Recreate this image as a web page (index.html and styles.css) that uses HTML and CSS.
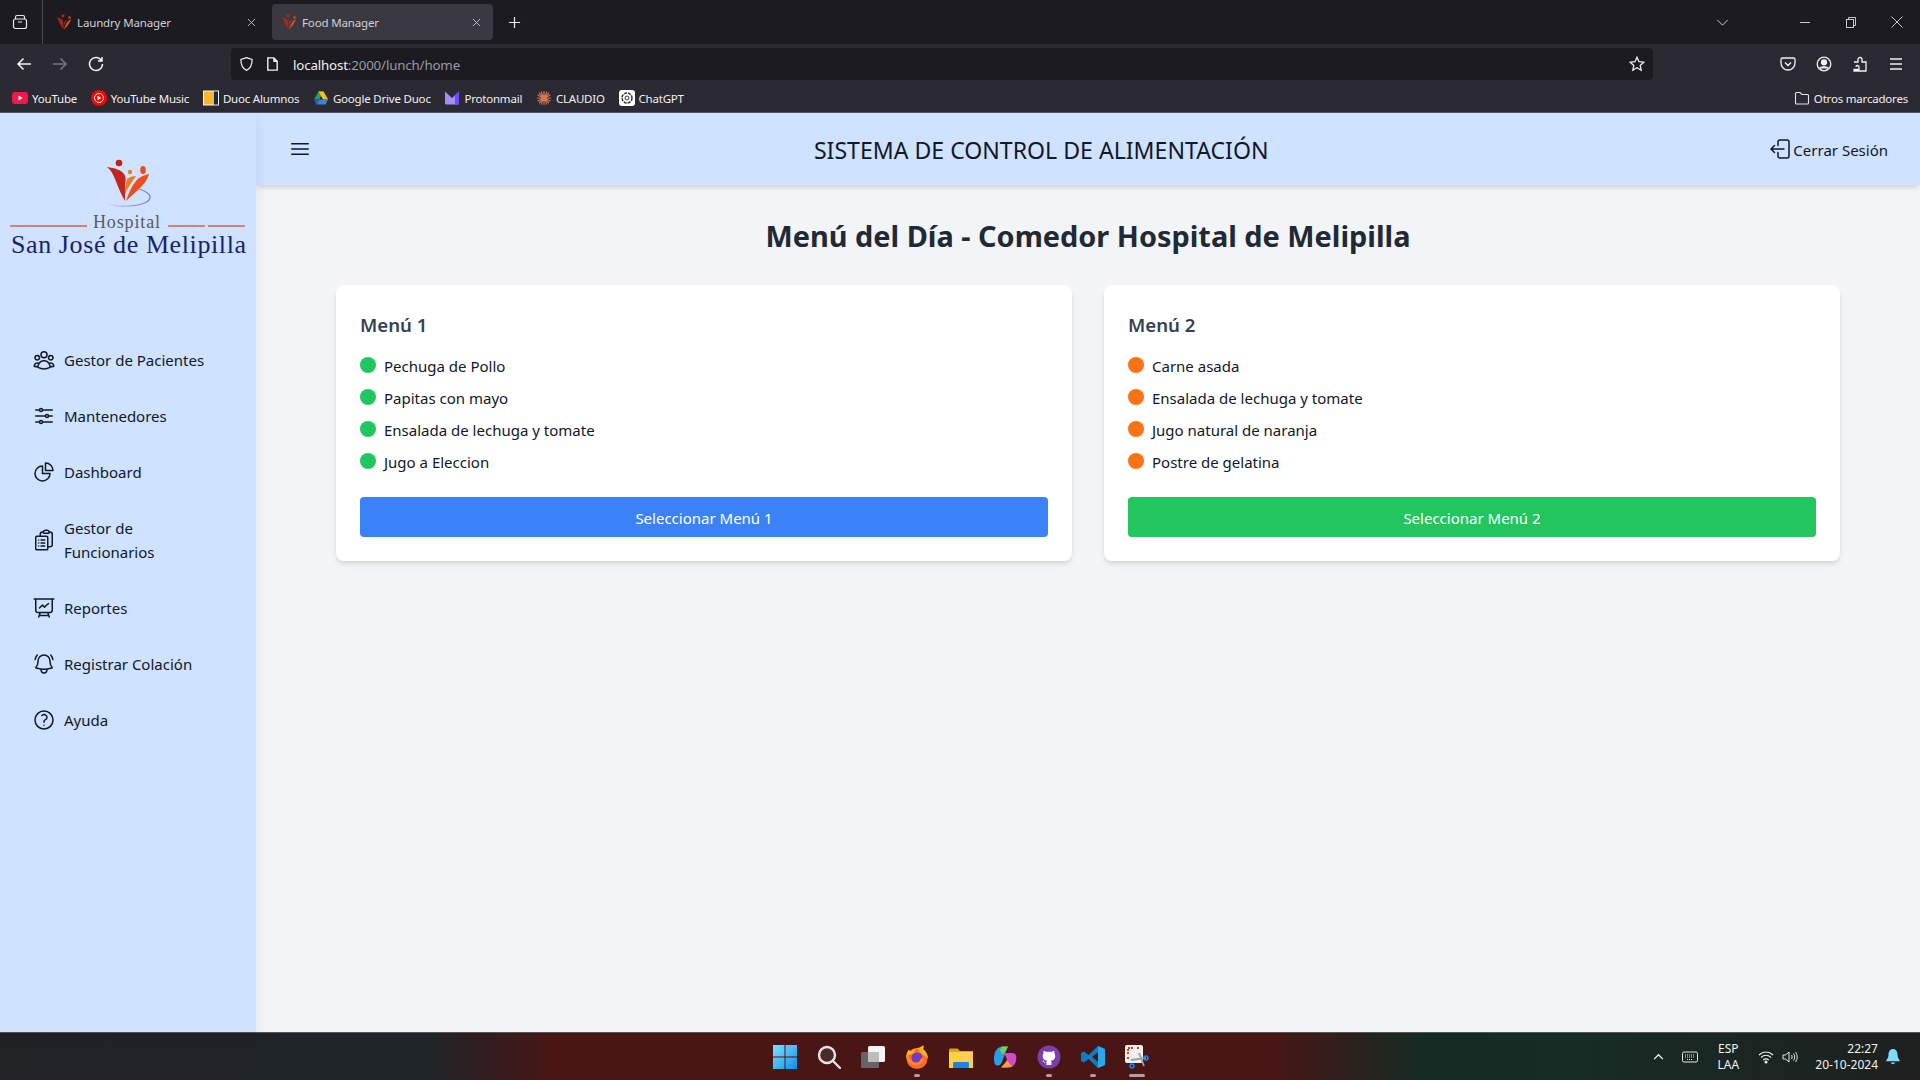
FILE: index.html
```html
<!DOCTYPE html>
<html lang="es">
<head>
<meta charset="utf-8">
<title>Food Manager</title>
<link rel="stylesheet" href="styles.css">
</head>
<body>
<div class="browser">
  <svg width="0" height="0" class="defs"><defs>
    <g id="fav"><circle cx="7" cy="1.800" r="1.500" fill="#b5261c"/><circle cx="13.500" cy="3.500" r="1.300" fill="#e0441c"/><path d="M1 3.500c3 .3 5.500 1.500 6 4 .5 2.500.5 5 .5 8C5 12 3 8 1 3.500z" fill="#a8261e"/><path d="M15 5c-1 4-4 7.500-7 10.500C9 11 11 7 15 5z" fill="#e0481c"/><path d="M11 5.500c-1.500 2-2.500 3.500-3 6 0-2.500.8-4.500 3-6z" fill="#e07a28"/></g>
  </defs></svg>
  <div class="tabstrip">
    <div class="tabs-btn"><svg width="16" height="16" viewBox="0 0 16 16" fill="none" stroke="#e8e8ea" stroke-width="1.200"><rect x="1.500" y="5" width="13" height="9.500" rx="2"/><path d="M3.500 5V3a1.500 1.500 0 0 1 1.500-1.500h6A1.500 1.500 0 0 1 12.500 3v2M6 8h4"/></svg></div>
    <div class="tab">
      <svg class="fav" viewBox="0 0 16 16"><use href="#fav"/></svg><span class="tab-title">Laundry Manager</span>
      <svg class="tab-x" viewBox="0 0 10 10" stroke="#c4c4c8" stroke-width="1"><path d="M1 1l8 8M9 1l-8 8"/></svg>
    </div>
    <div class="tab tab-active">
      <svg class="fav" viewBox="0 0 16 16"><use href="#fav"/></svg><span class="tab-title">Food Manager</span>
      <svg class="tab-x" viewBox="0 0 10 10" stroke="#c4c4c8" stroke-width="1"><path d="M1 1l8 8M9 1l-8 8"/></svg>
    </div>
    <svg class="newtab" viewBox="0 0 14 14" stroke="#e8e8ea" stroke-width="1.300"><path d="M7 1v12M1 7h12"/></svg>
    <div class="spacer"></div>
    <svg class="tabs-chev" viewBox="0 0 14 8" fill="none" stroke="#cfcfd3" stroke-width="1.100"><path d="M1 1l6 6 6-6"/></svg>
    <div class="winctl">
      <svg viewBox="0 0 12 12" stroke="#c8c8cc" fill="none"><path d="M1 6.500h10"/></svg>
      <svg viewBox="0 0 12 12" stroke="#c8c8cc" fill="none"><rect x="1.500" y="3.500" width="7" height="8"/><path d="M3.500 3.500v-2h7v8h-2"/></svg>
      <svg viewBox="0 0 12 12" stroke="#c8c8cc" fill="none"><path d="M.5.5l11 11M11.500.5l-11 11"/></svg>
    </div>
  </div>
  <div class="toolbar">
    <div class="nav-btns">
      <svg viewBox="0 0 16 16" fill="none" stroke="#f4f4f6" stroke-width="1.500"><path d="M15 8H2M7.500 2.500L2 8l5.500 5.500"/></svg>
      <svg viewBox="0 0 16 16" fill="none" stroke="#77777c" stroke-width="1.500"><path d="M1 8h13M8.500 2.500L14 8l-5.500 5.500"/></svg>
      <svg viewBox="0 0 16 16" fill="none" stroke="#f4f4f6" stroke-width="1.500"><path d="M13.500 4.500A6.500 6.500 0 1 0 14.500 8M14 1v4h-4"/></svg>
    </div>
    <div class="urlbar">
      <svg class="ub-ic" viewBox="0 0 16 16" fill="none" stroke="#f0f0f2" stroke-width="1.300"><path d="M8 1.200l6 2c0 6-1.500 9.500-6 11.600C3.500 12.700 2 9.200 2 3.200z"/></svg>
      <svg class="ub-ic" viewBox="0 0 16 16" fill="none" stroke="#f0f0f2" stroke-width="1.500"><path d="M3 1.500h6.500l3.500 3.500v9.500H3zM9.500 1.500V5H13"/></svg>
      <span class="url"><span class="url-host">localhost</span>:2000/lunch/home</span>
      <div class="spacer"></div>
      <svg class="ub-star" viewBox="0 0 16 16" fill="none" stroke="#f0f0f2" stroke-width="1.300"><path d="M8 1.300l2 4.400 4.800.5-3.600 3.200 1 4.800L8 11.800l-4.200 2.400 1-4.800L1.200 6.200 6 5.700z"/></svg>
    </div>
    <div class="tool-icons">
      <svg viewBox="0 0 16 16" fill="none" stroke="#f0f0f2" stroke-width="1.300"><path d="M2.500 2h11A1.500 1.500 0 0 1 15 3.500V7a7 7 0 0 1-14 0V3.500A1.500 1.500 0 0 1 2.500 2zM5 6.500L8 9.500l3-3"/></svg>
      <svg viewBox="0 0 16 16" fill="none" stroke="#f0f0f2" stroke-width="1.300"><circle cx="8" cy="8" r="6.800"/><circle cx="8" cy="6.300" r="2.500" fill="#f0f0f2"/><path d="M3.500 12.500c1-2.300 8-2.300 9 0" fill="#f0f0f2"/></svg>
      <svg viewBox="0 0 16 16" fill="none" stroke="#f0f0f2" stroke-width="1.300"><path d="M2 6h4V3.500a2 2 0 0 1 4 0V6h4v9H2v-1.500h5V11a1.500 1.500 0 0 0-3 0"/></svg>
      <svg viewBox="0 0 16 16" fill="none" stroke="#f0f0f2" stroke-width="1.300"><path d="M2 3h12M2 8h12M2 13h12"/></svg>
    </div>
  </div>
  <div class="bookmarks">
    <div class="bm"><svg class="bm-ic" viewBox="0 0 16 16"><rect y="2" width="16" height="12" rx="3" fill="#f0194a"/><path d="M6.500 5.500v5l4-2.500z" fill="#fff"/></svg>YouTube</div>
    <div class="bm"><svg class="bm-ic" viewBox="0 0 16 16"><circle cx="8" cy="8" r="8" fill="#f00"/><circle cx="8" cy="8" r="4.500" fill="none" stroke="#fff"/><path d="M6.500 5.800v4.400L10.300 8z" fill="#fff"/></svg>YouTube Music</div>
    <div class="bm"><svg class="bm-ic" viewBox="0 0 16 16"><rect x=".5" y="1" width="15" height="14" fill="#fbb62c" stroke="#f4f4f4"/><rect x="11" y="1.500" width="4" height="13" fill="#0d2b56"/></svg>Duoc Alumnos</div>
    <div class="bm"><svg class="bm-ic" viewBox="0 0 16 16"><path d="M5.500 1.500h5L6.200 9.500H1z" fill="#1ea362"/><path d="M10.500 1.500L15 9.500h-5L5.500 1.500z" fill="#ffc107"/><path d="M3.500 14.500L6.200 9.500H15l-2.500 5z" fill="#3f7ee8"/><path d="M1 9.500h5.200l-2.700 5z" fill="#1265c9"/></svg>Google Drive Duoc</div>
    <div class="bm"><svg class="bm-ic" viewBox="0 0 16 16"><path d="M1 1.500L8 8l7-6.500V13a1.500 1.500 0 0 1-1.500 1.500h-11A1.500 1.500 0 0 1 1 13z" fill="#a98cf5"/><path d="M8 8l7-6.500V14.500h-4V6z" fill="#6d4aff"/></svg>Protonmail</div>
    <div class="bm"><svg class="bm-ic" viewBox="0 0 16 16" stroke="#d97757" stroke-width="1.100"><path d="M8 1v14M1 8h14M3 3l10 10M13 3L3 13M5 1.500l6 13M11 1.500l-6 13M1.500 5l13 6M14.500 5l-13 6"/></svg>CLAUDIO</div>
    <div class="bm"><svg class="bm-ic" viewBox="0 0 16 16"><rect width="16" height="16" rx="3" fill="#fff"/><circle cx="8" cy="8" r="5" fill="none" stroke="#333" stroke-width="1.500" stroke-dasharray="3 1"/><circle cx="8" cy="8" r="2" fill="none" stroke="#333"/></svg>ChatGPT</div>
    <div class="spacer"></div>
    <div class="bm bm-other"><svg class="bm-ic" viewBox="0 0 16 16" fill="none" stroke="#e6e6e8" stroke-width="1.100"><path d="M1.500 13V3.500a1 1 0 0 1 1-1h3.500L8 4.500h5.500a1 1 0 0 1 1 1V13a1 1 0 0 1-1 1h-11a1 1 0 0 1-1-1z"/></svg>Otros marcadores</div>
  </div>
</div>

<div class="app">
  <aside class="sidebar">
    <div class="logo">
      <svg width="256" height="219" viewBox="0 0 256 219">
        <defs><linearGradient id="ring" x1="0" y1="0" x2="1" y2="0"><stop offset="0" stop-color="#e4e4f6"/><stop offset="1" stop-color="#7a70b8"/></linearGradient></defs>
        <path d="M108 78c-10 6-8 13 10 15 18 1 34-3 32-10-1-3-5-5-11-7" fill="none" stroke="url(#ring)" stroke-width="1.200"/>
        <circle cx="119" cy="50" r="3.300" fill="#c2201c"/>
        <ellipse cx="143" cy="57" rx="2.800" ry="4" fill="#f04a1c"/>
        <circle cx="130" cy="59" r="2.200" fill="#ee7a20"/>
        <path d="M107 54c8 1 14 3 17 7 2 3 2 6 1 10l0 17c-4-7-7-14-10-22-2-5-4-9-8-12z" fill="#c3261d"/>
        <path d="M136 63c-4 6-8 11-11 18 0-6 1-11 2-15 3-2 6-3 9-3z" fill="#ee7a24"/>
        <path d="M149 61c-2 7-6 11-10 15l-13 12c2-6 5-14 10-20 3-4 8-6 13-7z" fill="#f04d1e"/>
        <path d="M10 113h77M168 113h37M208 113h37" stroke="#e25a4a" stroke-width="1.300"/>
        <text x="93" y="115" class="logo-small" textLength="67">Hospital</text>
        <text x="11" y="140" class="logo-big" textLength="235">San José de Melipilla</text>
      </svg>
    </div>
    <nav class="nav">
      <a class="nav-item"><svg class="hi" viewBox="0 0 24 24"><path d="M18 18.720a9.094 9.094 0 003.741-.479 3 3 0 00-4.682-2.720m.94 3.198l.001.031c0 .225-.012.447-.037.666A11.944 11.944 0 0112 21c-2.170 0-4.207-.576-5.963-1.584A6.062 6.062 0 016 18.719m12 0a5.971 5.971 0 00-.941-3.197m0 0A5.995 5.995 0 0012 12.750a5.995 5.995 0 00-5.058 2.772m0 0a3 3 0 00-4.681 2.720 8.986 8.986 0 003.740.477m.94-3.197a5.971 5.971 0 00-.94 3.197M15 6.750a3 3 0 11-6 0 3 3 0 016 0zm6 3a2.250 2.250 0 11-4.500 0 2.250 2.250 0 014.500 0zm-13.500 0a2.250 2.250 0 11-4.500 0 2.250 2.250 0 014.500 0z"/></svg><span>Gestor de Pacientes</span></a>
      <a class="nav-item"><svg class="hi" viewBox="0 0 24 24"><path d="M10.500 6h9.750M10.500 6a1.500 1.500 0 11-3 0m3 0a1.500 1.500 0 10-3 0M3.750 6H7.500m3 12h9.750m-9.750 0a1.500 1.500 0 01-3 0m3 0a1.500 1.500 0 00-3 0m-3.750 0H7.500m9-6h3.750m-3.750 0a1.500 1.500 0 01-3 0m3 0a1.500 1.500 0 00-3 0m-9.750 0h9.750"/></svg><span>Mantenedores</span></a>
      <a class="nav-item"><svg class="hi" viewBox="0 0 24 24"><path d="M10.500 6a7.500 7.500 0 107.500 7.500h-7.500V6z"/><path d="M13.500 10.500H21A7.500 7.500 0 0013.500 3v7.500z"/></svg><span>Dashboard</span></a>
      <a class="nav-item"><svg class="hi" viewBox="0 0 24 24"><path d="M9 12h3.750M9 15h3.750M9 18h3.750m3 .75H18a2.250 2.250 0 002.250-2.250V6.108c0-1.135-.845-2.098-1.976-2.192a48.424 48.424 0 00-1.123-.08m-5.801 0c-.065.21-.1.433-.1.664 0 .414.336.75.75.75h4.500a.75.75 0 00.75-.75 2.250 2.250 0 00-.1-.664m-5.800 0A2.251 2.251 0 0113.500 2.250H15c1.012 0 1.867.668 2.150 1.586m-5.800 0c-.376.023-.75.05-1.124.08C9.095 4.010 8.250 4.973 8.250 6.108V8.250m0 0H4.875c-.621 0-1.125.504-1.125 1.125v11.250c0 .621.504 1.125 1.125 1.125h9.750c.621 0 1.125-.504 1.125-1.125V9.375c0-.621-.504-1.125-1.125-1.125H8.250zM6.750 12h.008v.008H6.750V12zm0 3h.008v.008H6.750V15zm0 3h.008v.008H6.750V18z"/></svg><span>Gestor de<br>Funcionarios</span></a>
      <a class="nav-item"><svg class="hi" viewBox="0 0 24 24"><path d="M3.750 3v11.250A2.250 2.250 0 006 16.500h2.250M3.750 3h-1.500m1.500 0h16.500m0 0h1.500m-1.500 0v11.250A2.250 2.250 0 0118 16.500h-2.250m-7.500 0h7.500m-7.500 0l-1 3m8.500-3l1 3m0 0l.5 1.500m-.5-1.500h-9.500m0 0l-.5 1.500m.75-9l3-3 2.148 2.148A12.061 12.061 0 0116.500 7.605"/></svg><span>Reportes</span></a>
      <a class="nav-item"><svg class="hi" viewBox="0 0 24 24"><path d="M14.857 17.082a23.848 23.848 0 005.454-1.310A8.967 8.967 0 0118 9.750v-.7V9A6 6 0 006 9v.75a8.967 8.967 0 01-2.312 6.022c1.733.64 3.560 1.085 5.455 1.310m5.714 0a24.255 24.255 0 01-5.714 0m5.714 0a3 3 0 11-5.714 0M3.124 7.500A8.969 8.969 0 015.292 3m13.416 0a8.969 8.969 0 012.168 4.500"/></svg><span>Registrar Colación</span></a>
      <a class="nav-item"><svg class="hi" viewBox="0 0 24 24"><path d="M9.879 7.519c1.171-1.025 3.071-1.025 4.242 0 1.172 1.025 1.172 2.687 0 3.712-.203.179-.43.326-.67.442-.745.361-1.450.999-1.450 1.827v.75M21 12a9 9 0 11-18 0 9 9 0 0118 0zm-9 5.250h.008v.008H12v-.008z"/></svg><span>Ayuda</span></a>
    </nav>
  </aside>
  <div class="content">
    <header class="topbar">
      <svg class="hi burger" viewBox="0 0 24 24"><path d="M3.750 6.750h16.500M3.750 12h16.500m-16.500 5.250h16.500"/></svg>
      <h1 class="app-title">SISTEMA DE CONTROL DE ALIMENTACIÓN</h1>
      <a class="logout"><svg class="hi logout-ic" viewBox="1 0 20 24"><path d="M9 8.500V5a2 2 0 012-2h7a2 2 0 012 2v14a2 2 0 01-2 2h-7a2 2 0 01-2-2v-3.500M15 12H2m0 0l3.500-3.500M2 12l3.500 3.500"/></svg><span>Cerrar Sesión</span></a>
    </header>
    <main class="main">
      <h2 class="page-title">Menú del Día - Comedor Hospital de Melipilla</h2>
      <div class="cards">
        <section class="card">
          <h3 class="card-title">Menú 1</h3>
          <ul class="items items-green">
            <li>Pechuga de Pollo</li>
            <li>Papitas con mayo</li>
            <li>Ensalada de lechuga y tomate</li>
            <li>Jugo a Eleccion</li>
          </ul>
          <button class="btn btn-blue">Seleccionar Menú 1</button>
        </section>
        <section class="card">
          <h3 class="card-title">Menú 2</h3>
          <ul class="items items-orange">
            <li>Carne asada</li>
            <li>Ensalada de lechuga y tomate</li>
            <li>Jugo natural de naranja</li>
            <li>Postre de gelatina</li>
          </ul>
          <button class="btn btn-green">Seleccionar Menú 2</button>
        </section>
      </div>
    </main>
  </div>
</div>

<footer class="taskbar">
  <div class="task-apps">
    <div class="task-app"><svg viewBox="0 0 24 24"><defs><linearGradient id="w" x1="0" y1="0" x2="1" y2="1"><stop offset="0" stop-color="#7fe0ff"/><stop offset="1" stop-color="#0f8fe8"/></linearGradient></defs><path fill="url(#w)" d="M0 0h11.500v11.500H0zM12.500 0H24v11.500H12.500zM0 12.500h11.500V24H0zM12.500 12.500H24V24H12.500z"/></svg></div>
    <div class="task-app"><svg viewBox="0 0 24 24" fill="none" stroke="#e8e4e4" stroke-width="2.400"><circle cx="10" cy="10" r="8" fill="#4a2a2a"/><path d="M16 16l7 7" stroke-linecap="round"/></svg></div>
    <div class="task-app"><svg viewBox="0 0 24 24"><rect x="7" y="1" width="17" height="16" rx="1.500" fill="#f4f4f4"/><rect x="0" y="7" width="18" height="16" rx="1.500" fill="#6a6a6a" fill-opacity=".92"/><rect x="7" y="7" width="11" height="10" fill="#bdbdbd"/></svg></div>
    <div class="task-app on"><svg viewBox="0 0 24 24"><circle cx="12" cy="13.500" r="10.500" fill="#ff6a2a"/><path d="M12 3c4-.5 5-2 6-3 1 2 1 3 0 4 3 2 5 6 5 9.500L16 8z" fill="#ffb320"/><path d="M1.500 11c0-3 1-5 2.500-6.500L5 6.500 12 3c-2 2-3 3-3 5z" fill="#ffb320"/><circle cx="12" cy="13" r="5.500" fill="#6e3bc4"/><path d="M2 10c1 6 6 10 11 8.500 3-1 4-3 4-5" fill="none" stroke="#ff8a2a" stroke-width="2.500"/></svg></div>
    <div class="task-app"><svg viewBox="0 0 24 24"><path d="M0 5a1.500 1.500 0 0 1 1.500-1.500h7L11 6h13v16H0z" fill="#d9a520"/><rect y="7" width="24" height="16" fill="#fbd04a"/><rect x="4" y="17" width="16" height="6" rx="1" fill="#1a88d8"/></svg></div>
    <div class="task-app"><svg viewBox="0 0 24 24"><path d="M1 14C1 7 4 2 9 1.500h6L10 14c-1 5-4 7-6 6.500-2 0-3-3-3-6.500z" fill="#2a9fe8"/><path d="M9 1.500h6l-5 8-3-4z" fill="#7bd04a"/><path d="M11 8h8c4 0 5 3 4 8-1 5-5 7-9 6.500H8c3-1 5-4 6-8z" fill="#d04ac8"/><path d="M14 22.500H8l6-7 5 6z" fill="#f0a040"/></svg></div>
    <div class="task-app on"><svg viewBox="0 0 24 24"><circle cx="12" cy="12" r="11.500" fill="#7a3fa8"/><path d="M9.500 20v-2.500c-3 .6-3.500-1.200-4-2 .5 0 1.300.3 2 1.300.7.800 1.500.5 2 .2 0-.7.300-1.100.6-1.400-2.400-.3-4.400-1.300-4.400-4.600 0-1 .3-1.800.9-2.400-.1-.3-.4-1.200.1-2.500 0 0 1-.3 2.700 1 1.600-.4 3.500-.4 5.100 0 1.700-1.300 2.700-1 2.700-1 .5 1.300.2 2.200.1 2.500.6.600.9 1.400.9 2.400 0 3.300-2 4.300-4.400 4.600.4.400.6.900.6 1.700V20z" fill="#fff"/></svg></div>
    <div class="task-app on"><svg viewBox="0 0 24 24"><path d="M17 1l7 3v16l-7 3L7.500 14l-4.500 3.500L0 16V8l3-1.500 4.500 3.500z" fill="#0e7dc8"/><path d="M17 1l7 3v16l-7 3zM17 7l-6 5 6 5z" fill="#2aa8ec"/><path d="M17 7l-6 5 6 5z" fill="#4a1414"/></svg></div>
    <div class="task-app on wide"><svg viewBox="0 0 24 24"><rect x="0" y="0" width="18" height="18" rx="2" fill="#f2efef"/><path d="M3 9V3h6M12 3h2M3 12v2" stroke="#d8362a" stroke-width="2" stroke-dasharray="2 1" fill="none"/><path d="M6 15l15-2M14 8l5 13" stroke="#9aa0a8" stroke-width="1.800"/><circle cx="21" cy="13" r="2" fill="none" stroke="#1a88e8" stroke-width="1.500"/><circle cx="7" cy="21" r="2" fill="none" stroke="#1a88e8" stroke-width="1.500"/></svg></div>
  </div>
  <div class="tray">
    <svg class="tray-chev" viewBox="0 0 12 8" fill="none" stroke="#f0f0f0" stroke-width="1.500"><path d="M1 7l5-5 5 5"/></svg>
    <svg class="tray-kb" viewBox="0 0 16 12" fill="none" stroke="#e8e8e8"><rect x=".5" y="1" width="15" height="10" rx="1.500"/><path d="M3 4h10M3 6h10M5 8.500h6" stroke-dasharray="1 1"/></svg>
    <div class="tray-lang"><span>ESP</span><span>LAA</span></div>
    <svg class="tray-wifi" viewBox="0 0 16 14" fill="none" stroke="#f0f0f0" stroke-width="1.100"><path d="M1 5c4-4 10-4 14 0M3 7.500c3-2.700 7-2.700 10 0M5.200 10c1.700-1.300 3.900-1.300 5.600 0"/><circle cx="8" cy="12" r="1" fill="#f0f0f0"/></svg>
    <svg class="tray-vol" viewBox="0 0 16 14" fill="none" stroke="#e8e8e8" stroke-width="1"><path d="M1 5v4h2.500L7 12V2L3.500 5zM9.500 5c.8 1.200.8 2.800 0 4M11.500 3.500c1.500 2 1.500 5 0 7M13.500 2c2.200 3 2.200 7 0 10"/></svg>
    <div class="tray-clock"><span>22:27</span><span>20-10-2024</span></div>
    <svg class="tray-bell" viewBox="0 0 14 16" fill="#7fdcfa"><path d="M7 0c3 0 4.500 2.500 4.500 5.500 0 2.500.8 4 2.200 5.800.3.500 0 1-.6 1H.9c-.6 0-.9-.5-.6-1C1.700 9.500 2.500 8 2.500 5.500 2.500 2.500 4 0 7 0zM4.800 13.500h4.400a2.300 2.300 0 0 1-4.400 0z"/></svg>
  </div>
</footer>
</body>
</html>
```

FILE: styles.css
```css
* { box-sizing: border-box; }
html, body { margin: 0; padding: 0; }
body {
  width: 1920px;
  height: 1080px;
  overflow: hidden;
  display: flex;
  flex-direction: column;
  font-family: "Noto Sans", "Open Sans", sans-serif;
  background: #f3f4f6;
  color: #111827;
}
.defs { display: block; height: 0; }
.spacer { flex: 1; }

/* browser chrome */
.browser { flex: none; height: 113px; background: #2b2a33; border-bottom: 1px solid #55555f; color: #f0f0f2; }
.tabstrip { height: 44px; background: #1c1b22; display: flex; align-items: center; }
.tabs-btn { width: 43px; height: 44px; display: flex; align-items: center; justify-content: center; border-right: 1px solid #4c4c54; padding-right: 3px; flex: none; }
.tab { width: 229px; height: 36px; border-radius: 4px; display: flex; align-items: center; padding: 0 16px 0 13px; font-size: 11.500px; color: #d0d0d4; flex: none; }
.tab-active { background: #3a3942; width: 221px; padding: 0 12px 0 9px; }
.fav { width: 16px; height: 16px; margin-right: 5px; flex: none; }
.tab-title { flex: 1; white-space: nowrap; letter-spacing: -.15px; }
.tab-x { width: 9px; height: 9px; flex: none; }
.newtab { width: 13px; height: 13px; margin-left: 15px; flex: none; }
.tabs-chev { width: 13px; height: 7px; flex: none; margin-right: 70px; }
.winctl { display: flex; gap: 34px; padding-right: 17px; align-items: center; }
.winctl svg { width: 12px; height: 12px; display: block; }

.toolbar { height: 42px; display: flex; align-items: flex-start; padding-top: 4px; }
.nav-btns { width: 231px; height: 32px; padding-left: 16px; display: flex; align-items: center; gap: 20px; flex: none; }
.nav-btns svg { width: 16px; height: 16px; }
.urlbar { width: 1422px; height: 32px; background: #1c1b22; border-radius: 4px; display: flex; align-items: center; padding: 0 8px; flex: none; }
.ub-ic { width: 15px; height: 16px; margin-right: 11px; flex: none; }
.ub-ic + .ub-ic { margin-right: 13px; }
.url { font-size: 13.300px; color: #9a9aa0; letter-spacing: -.15px; padding-top: 2px; }
.url-host { color: #f4f4f6; }
.ub-star { width: 16px; height: 16px; flex: none; margin-right: 0; }
.tool-icons { flex: 1; height: 32px; display: flex; align-items: center; padding-left: 127px; gap: 20px; }
.tool-icons svg { width: 16px; height: 16px; flex: none; }

.bookmarks { height: 26px; display: flex; align-items: center; padding: 0 12px 2px; font-size: 11.500px; gap: 13.700px; }
.bm { display: flex; align-items: center; gap: 4px; white-space: nowrap; letter-spacing: -.2px; }
.bm-ic { width: 16px; height: 16px; flex: none; }

/* app */
.app { flex: 1; display: flex; min-height: 0; background: #f3f4f6; }
.sidebar { width: 256px; flex: none; background: #cfe2ff; box-shadow: 0 4px 12px rgba(0,0,0,.08); position: relative; z-index: 2; }
.logo svg { display: block; }
.logo-small { font-family: "Liberation Serif", serif; font-size: 18px; fill: #5a5a62; }
.logo-big { font-family: "Liberation Serif", serif; font-size: 26px; fill: #1a1f6e; }
.nav { display: flex; flex-direction: column; }
.nav-item { display: flex; align-items: center; gap: 8px; padding: 16px 32px; font-size: 15px; line-height: 24px; color: #111827; }
.hi { width: 24px; height: 24px; flex: none; fill: none; stroke: #111827; stroke-width: 1.500; stroke-linecap: round; stroke-linejoin: round; }

.content { flex: 1; min-width: 0; display: flex; flex-direction: column; }
.topbar { height: 72px; flex: none; background: #cfe2ff; display: flex; align-items: center; justify-content: space-between; padding: 0 32px; box-shadow: 0 4px 6px -1px rgba(0,0,0,.1), 0 2px 4px -2px rgba(0,0,0,.1); position: relative; z-index: 1; }
.burger { width: 24px; height: 24px; }
.app-title { margin: 0; padding-top: 2px; font-size: 23.100px; line-height: 32px; font-weight: 400; color: #111827; }
.logout { display: flex; align-items: center; font-size: 15px; line-height: 24px; }
.logout span { padding-top: 2px; }
.logout .logout-ic { width: 20px; margin-right: 3px; }
.main { flex: 1; padding: 33px 80px; }
.page-title { margin: 0 0 31px; text-align: center; font-size: 28.900px; line-height: 36px; font-weight: 700; color: #1f2937; }
.cards { display: grid; grid-template-columns: 1fr 1fr; gap: 32px; }
.card { background: #fff; border-radius: 8px; padding: 24px; box-shadow: 0 4px 6px -1px rgba(0,0,0,.1), 0 2px 4px -2px rgba(0,0,0,.1); }
.card-title { margin: 0 0 15px; padding-top: 2px; font-size: 18.600px; line-height: 28px; font-weight: 600; color: #374151; }
.items { list-style: none; margin: 0 0 23px; padding: 0; display: flex; flex-direction: column; gap: 8px; }
.items li { display: flex; align-items: center; gap: 8px; font-size: 15px; line-height: 24px; color: #111827; }
.items li::before { content: ""; width: 16px; height: 16px; border-radius: 50%; margin-top: -3px; background: #22c55e; flex: none; }
.items-orange li::before { background: #f97316; }
.btn { display: block; width: 100%; height: 40px; padding-top: 2px; border: 0; border-radius: 4px; color: #fff; font: inherit; font-size: 15px; }
.btn-blue { background: #3b82f6; }
.btn-green { background: #22c55e; }

/* taskbar */
.taskbar { flex: none; height: 48px; display: flex; align-items: center; color: #f2f2f2; border-top: 1px solid #555; background: linear-gradient(90deg, #202226 0%, #1e2428 22%, #4a1515 29%, #4a1515 66%, #142a22 74%, #172c24 82%, #1e2020 100%); }
.task-apps { display: flex; margin-left: 763px; }
.task-app { width: 44px; height: 47px; display: flex; align-items: center; justify-content: center; position: relative; }
.task-app svg { width: 24px; height: 24px; }
.task-app.on::after { content: ""; position: absolute; bottom: 3px; left: 19px; width: 6px; height: 3px; border-radius: 2px; background: #b0a0a0; }
.task-app.wide::after { left: 14px; width: 16px; }
.tray { margin-left: auto; display: flex; align-items: center; padding-right: 20px; font-size: 12px; line-height: 16px; }
.tray-chev { width: 11px; height: 7px; margin-right: 18.500px; }
.tray-kb { width: 16px; height: 12px; margin-right: 18px; }
.tray-lang { display: flex; flex-direction: column; align-items: center; width: 24px; margin-right: 18px; }
.tray-wifi { width: 16px; height: 14px; margin-right: 8px; }
.tray-vol { width: 16px; height: 14px; margin-right: 17px; }
.tray-clock { display: flex; flex-direction: column; align-items: flex-end; margin-right: 8px; }
.tray-bell { width: 14px; height: 16px; }
```
